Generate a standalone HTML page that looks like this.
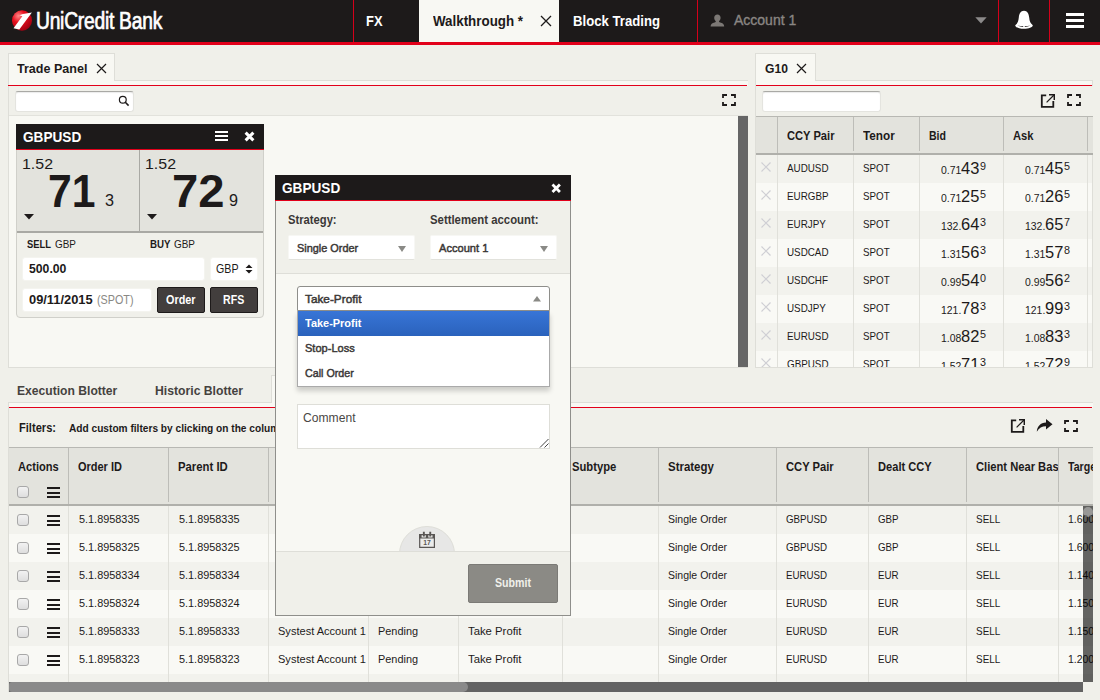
<!DOCTYPE html>
<html>
<head>
<meta charset="utf-8">
<title>UniCredit Bank</title>
<style>
*{box-sizing:border-box;margin:0;padding:0}
html,body{width:1100px;height:700px;overflow:hidden}
body{background:#f0f0ea;font-family:"Liberation Sans",Arial,sans-serif;font-size:12px;color:#1d1a1a;position:relative}
.a{position:absolute}
.t{position:absolute;white-space:nowrap;transform-origin:0 50%}
</style>
</head>
<body>
<div class="a" style="left:0px;top:0px;width:1100px;height:45px;background:#1d1a1a;border-bottom:3px solid #e2001a"></div>
<svg class="a" style="left:11px;top:9px" width="24" height="24" viewBox="0 0 24 24"><defs><radialGradient id="lg" cx="32%" cy="28%" r="78%"><stop offset="0" stop-color="#ff8a8a"/><stop offset=".4" stop-color="#e8101f"/><stop offset="1" stop-color="#a00012"/></radialGradient></defs><ellipse cx="11" cy="11.5" rx="10" ry="10.3" fill="url(#lg)"/><path d="M2.5 19.3 L8.3 20.4 L20.9 3.6 L11.9 4.9 L8.3 6.3 L11.3 7.2 Z" fill="#fff"/></svg>
<div class="t" style="left:35.5px;top:10px;font-size:23.3px;line-height:23.3px;color:#fff;transform:scaleX(0.8265);-webkit-text-stroke:.7px #fff;letter-spacing:-.3px;">UniCredit Bank</div>
<div class="a" style="left:353px;top:0px;width:1px;height:42px;background:#d4001a"></div>
<div class="a" style="left:697px;top:0px;width:1px;height:42px;background:#d4001a"></div>
<div class="a" style="left:998px;top:0px;width:1px;height:42px;background:#d4001a"></div>
<div class="a" style="left:1049px;top:0px;width:1px;height:42px;background:#d4001a"></div>
<div class="t" style="left:366px;top:14px;font-size:14px;line-height:14px;font-weight:bold;color:#fff;transform:scaleX(0.9223);">FX</div>
<div class="a" style="left:419px;top:0px;width:140px;height:42px;background:#f8f8f3"></div>
<div class="t" style="left:432.5px;top:14px;font-size:14px;line-height:14px;font-weight:bold;color:#1d1a1a;transform:scaleX(0.9538);">Walkthrough *</div>
<svg class="a" style="left:540px;top:15px" width="12" height="12" viewBox="0 0 12 12"><path d="M1 1 L11 11 M11 1 L1 11" stroke="#1d1a1a" stroke-width="1.3" fill="none"/></svg>
<div class="t" style="left:572.5px;top:14px;font-size:14px;line-height:14px;font-weight:bold;color:#fff;transform:scaleX(0.9399);">Block Trading</div>
<svg class="a" style="left:710px;top:13.5px" width="15" height="13" viewBox="0 0 15 13"><path d="M7.4 0.4 C9.4 0.4 10.6 1.9 10.6 3.8 C10.6 5.3 9.9 6.5 9 7.2 C9 7.8 9.3 8.2 10.2 8.5 C12.6 9.2 14.2 9.9 14.2 12.6 L0.6 12.6 C0.6 9.9 2.2 9.2 4.6 8.5 C5.5 8.2 5.8 7.8 5.8 7.2 C4.9 6.5 4.2 5.3 4.2 3.8 C4.200 1.900 5.400 0.400 7.400 0.400 Z" fill="#7c7875"/></svg>
<div class="t" style="left:734px;top:13px;font-size:14px;line-height:14px;color:#8a8683;transform:scaleX(0.9991);-webkit-text-stroke:.35px #8a8683;">Account 1</div>
<svg class="a" style="left:975px;top:17px" width="12" height="7" viewBox="0 0 12 7"><path d="M0.3 0.2 L11.7 0.2 L6 6.6 Z" fill="#8c8a8a"/></svg>
<svg class="a" style="left:1014px;top:10px" width="20" height="20" viewBox="0 0 20 20"><path d="M10 0.8 C13.4 0.8 14.9 3.8 15.2 7.6 C15.5 11.6 16.6 13.6 18.8 15.2 C18.8 17.4 14.6 18.8 10 18.8 C5.4 18.8 1.2 17.4 1.2 15.200 C3.4 13.6 4.5 11.6 4.8 7.6 C5.1 3.8 6.6 0.8 10 0.8 Z" fill="#fff"/><path d="M3.4 15.3 C5 16.6 7.6 17 10 17 C12.4 17 15 16.6 16.6 15.3 C15 15.9 12.4 16.1 10 16.1 C7.6 16.1 5 15.9 3.4 15.3 Z" fill="#1d1a1a"/><circle cx="10" cy="16.5" r="0.9" fill="#fff"/></svg>
<div class="a" style="left:1066.3px;top:12.8px;width:17.7px;height:3.4px;background:#fff"></div>
<div class="a" style="left:1066.3px;top:18.8px;width:17.7px;height:3.4px;background:#fff"></div>
<div class="a" style="left:1066.3px;top:24.8px;width:17.7px;height:3.4px;background:#fff"></div>
<div class="a" style="left:8px;top:53px;width:107px;height:28px;background:#f8f8f3;border:1px solid #deded8;border-bottom:none"></div>
<div class="t" style="left:17px;top:62px;font-size:13px;line-height:13px;font-weight:bold;color:#1d1a1a;transform:scaleX(0.9661);">Trade Panel</div>
<svg class="a" style="left:95.5px;top:63px" width="11" height="11" viewBox="0 0 11 11"><path d="M1 1 L10 10 M10 1 L1 10" stroke="#1d1a1a" stroke-width="1.2" fill="none"/></svg>
<div class="a" style="left:115px;top:80px;width:633px;height:1px;background:#deded8"></div>
<div class="a" style="left:8px;top:81px;width:740px;height:287px;background:#f8f8f3;border-left:1px solid #deded8;border-bottom:1px solid #deded8"></div>
<div class="a" style="left:8px;top:85px;width:739px;height:1px;background:#e2001a"></div>
<div class="a" style="left:9px;top:86px;width:739px;height:30px;background:#f0f0ea;border-bottom:1px solid #e2e2dc"></div>
<div class="a" style="left:15px;top:91px;width:119px;height:21px;background:#fff;border:1px solid #e4e4df;border-top:1px solid #a9a9a5;border-radius:3px;box-shadow:inset 0 1px 1px rgba(0,0,0,.08)"></div>
<svg class="a" style="left:118px;top:95px" width="12" height="12" viewBox="0 0 12 12"><circle cx="4.8" cy="4.8" r="3.4" stroke="#1d1a1a" stroke-width="1.2" fill="none"/><path d="M7.3 7.3 L10.6 10.6" stroke="#1d1a1a" stroke-width="1.6"/></svg>
<svg class="a" style="left:722px;top:94px" width="14" height="12" viewBox="0 0 14 12"><path d="M1 4 V1 H5 M9 1 H13 V4 M13 8 V11 H9 M5 11 H1 V8" stroke="#1d1a1a" stroke-width="1.8" fill="none"/></svg>
<div class="a" style="left:738px;top:116px;width:10px;height:251px;background:#666"></div>
<div class="a" style="left:16px;top:124px;width:248px;height:194px;background:#f0f0ea;border:1px solid #d0d0ca;border-radius:0 0 4px 4px"></div>
<div class="a" style="left:16px;top:124px;width:248px;height:26px;background:#1d1a1a;border-bottom:1px solid #e2001a"></div>
<div class="t" style="left:23px;top:129px;font-size:15px;line-height:15px;font-weight:bold;color:#fff;transform:scaleX(0.9069);">GBPUSD</div>
<div class="a" style="left:215.4px;top:131px;width:12.6px;height:2px;background:#fff"></div>
<div class="a" style="left:215.4px;top:135px;width:12.6px;height:2px;background:#fff"></div>
<div class="a" style="left:215.4px;top:139px;width:12.6px;height:2px;background:#fff"></div>
<svg class="a" style="left:244.4px;top:130.6px" width="11" height="11" viewBox="0 0 11 11"><path d="M1.6 1.6 L9.4 9.4 M9.4 1.6 L1.6 9.4" stroke="#fff" stroke-width="3" fill="none"/></svg>
<div class="a" style="left:17px;top:150px;width:246px;height:81px;background:#e3e3dd"></div>
<div class="a" style="left:17px;top:231px;width:246px;height:2px;background:#a9a9a4"></div>
<div class="a" style="left:139px;top:150px;width:1px;height:81px;background:#a9a9a4"></div>
<div class="t" style="left:22px;top:156px;font-size:15px;line-height:15px;color:#1d1a1a;transform:scaleX(1.0620);">1.52</div>
<div class="t" style="left:48.4px;top:168px;font-size:46px;line-height:46px;font-weight:bold;color:#1d1a1a;transform:scaleX(0.9284);">71</div>
<div class="t" style="left:104.5px;top:192px;font-size:17px;line-height:17px;color:#1d1a1a;transform:scaleX(0.9520);">3</div>
<svg class="a" style="left:24px;top:214px" width="10" height="6" viewBox="0 0 10 6"><path d="M0 0 H10 L5 5.5 Z" fill="#1d1a1a"/></svg>
<div class="t" style="left:145px;top:156px;font-size:15px;line-height:15px;color:#1d1a1a;transform:scaleX(1.0620);">1.52</div>
<div class="t" style="left:171.5px;top:168px;font-size:46px;line-height:46px;font-weight:bold;color:#1d1a1a;transform:scaleX(1.0262);">72</div>
<div class="t" style="left:229px;top:192px;font-size:17px;line-height:17px;color:#1d1a1a;transform:scaleX(0.9520);">9</div>
<svg class="a" style="left:147px;top:214px" width="10" height="6" viewBox="0 0 10 6"><path d="M0 0 H10 L5 5.5 Z" fill="#1d1a1a"/></svg>
<div class="t" style="left:27px;top:239px;font-size:11px;line-height:11px;font-weight:bold;color:#1d1a1a;transform:scaleX(0.8537);">SELL</div>
<div class="t" style="left:54.7px;top:239px;font-size:11px;line-height:11px;color:#1d1a1a;transform:scaleX(0.9040);">GBP</div>
<div class="t" style="left:150px;top:239px;font-size:11px;line-height:11px;font-weight:bold;color:#1d1a1a;transform:scaleX(0.8827);">BUY</div>
<div class="t" style="left:174px;top:239px;font-size:11px;line-height:11px;color:#1d1a1a;transform:scaleX(0.9040);">GBP</div>
<div class="a" style="left:22px;top:257px;width:183px;height:24px;background:#fff;border:1px solid #f4f4ef;border-radius:3px"></div>
<div class="t" style="left:29.3px;top:263px;font-size:12px;line-height:12px;font-weight:bold;color:#1d1a1a;transform:scaleX(1.0191);">500.00</div>
<div class="a" style="left:210px;top:257px;width:48px;height:24px;background:#fff;border:1px solid #f4f4ef;border-radius:3px"></div>
<div class="t" style="left:216.3px;top:263px;font-size:12px;line-height:12px;color:#1d1a1a;transform:scaleX(0.8878);">GBP</div>
<svg class="a" style="left:245px;top:263px" width="8" height="12" viewBox="0 0 8 12"><path d="M0.5 5 L4 1.4 L7.5 5 Z M0.5 7 L4 10.6 L7.5 7 Z" fill="#1d1a1a"/></svg>
<div class="a" style="left:22px;top:288px;width:130px;height:24px;background:#fff;border:1px solid #f4f4ef;border-radius:3px"></div>
<div class="t" style="left:29.3px;top:294px;font-size:12px;line-height:12px;font-weight:bold;color:#1d1a1a;transform:scaleX(1.0709);">09/11/2015</div>
<div class="t" style="left:97.1px;top:294px;font-size:12px;line-height:12px;color:#8a8884;transform:scaleX(0.8976);">(SPOT)</div>
<div class="a" style="left:157px;top:287px;width:48px;height:26px;background:#423e3d;border:1px solid #1d1a1a;border-radius:2px"></div>
<div class="t" style="left:166.3px;top:294px;font-size:12px;line-height:12px;font-weight:bold;color:#fff;transform:scaleX(0.9028);">Order</div>
<div class="a" style="left:210px;top:287px;width:48px;height:26px;background:#423e3d;border:1px solid #1d1a1a;border-radius:2px"></div>
<div class="t" style="left:223.3px;top:294px;font-size:12px;line-height:12px;font-weight:bold;color:#fff;transform:scaleX(0.8833);">RFS</div>
<div class="a" style="left:755px;top:53px;width:61px;height:28px;background:#f8f8f3;border:1px solid #deded8;border-bottom:none"></div>
<div class="t" style="left:764.5px;top:62px;font-size:13px;line-height:13px;font-weight:bold;color:#1d1a1a;transform:scaleX(0.9320);">G10</div>
<svg class="a" style="left:796px;top:63px" width="11" height="11" viewBox="0 0 11 11"><path d="M1 1 L10 10 M10 1 L1 10" stroke="#1d1a1a" stroke-width="1.2" fill="none"/></svg>
<div class="a" style="left:816px;top:80px;width:277px;height:1px;background:#deded8"></div>
<div class="a" style="left:755px;top:81px;width:338px;height:287px;background:#f8f8f3;border:1px solid #deded8;border-top:none"></div>
<div class="a" style="left:756px;top:85px;width:336px;height:1px;background:#e2001a"></div>
<div class="a" style="left:756px;top:86px;width:337px;height:30px;background:#f0f0ea"></div>
<div class="a" style="left:762px;top:91px;width:119px;height:21px;background:#fff;border:1px solid #e4e4df;border-top:1px solid #a9a9a5;border-radius:3px;box-shadow:inset 0 1px 1px rgba(0,0,0,.08)"></div>
<svg class="a" style="left:1040px;top:93px" width="15" height="15" viewBox="0 0 15 15"><path d="M6.2 2.3 H1.8 V13.8 H13.3 V8" stroke="#1d1a1a" stroke-width="1.8" fill="none"/><path d="M9 1.7 H14.300 V7" stroke="#1d1a1a" stroke-width="1.500" fill="none"/><path d="M14 2 L6.600 9.400" stroke="#1d1a1a" stroke-width="1.200" fill="none"/></svg>
<svg class="a" style="left:1067px;top:94px" width="14" height="12" viewBox="0 0 14 12"><path d="M1 4 V1 H5 M9 1 H13 V4 M13 8 V11 H9 M5 11 H1 V8" stroke="#1d1a1a" stroke-width="1.8" fill="none"/></svg>
<div class="a" style="left:756px;top:116px;width:337px;height:39px;background:#e3e3dd;border-top:1px solid #b8b8b3;border-bottom:2px solid #b0b0ab"></div>
<div class="a" style="left:777px;top:117px;width:1px;height:36px;background:#bdbdb8"></div>
<div class="a" style="left:853px;top:117px;width:1px;height:34px;background:#bdbdb8"></div>
<div class="a" style="left:919px;top:117px;width:1px;height:34px;background:#bdbdb8"></div>
<div class="a" style="left:1003px;top:117px;width:1px;height:34px;background:#bdbdb8"></div>
<div class="a" style="left:1087px;top:117px;width:1px;height:34px;background:#bdbdb8"></div>
<div class="t" style="left:787px;top:130px;font-size:12px;line-height:12px;font-weight:bold;color:#1d1a1a;transform:scaleX(0.9289);">CCY Pair</div>
<div class="t" style="left:863.3px;top:130px;font-size:12px;line-height:12px;font-weight:bold;color:#1d1a1a;transform:scaleX(0.9772);">Tenor</div>
<div class="t" style="left:929px;top:130px;font-size:12px;line-height:12px;font-weight:bold;color:#1d1a1a;transform:scaleX(0.8795);">Bid</div>
<div class="t" style="left:1013px;top:130px;font-size:12px;line-height:12px;font-weight:bold;color:#1d1a1a;transform:scaleX(0.9313);">Ask</div>
<div class="a" style="left:756px;top:155px;width:336px;height:212px;overflow:hidden">
<div class="a" style="left:0px;top:0px;width:336px;height:28px;background:#f2f2ed"></div>
<svg class="a" style="left:5px;top:6.5px" width="10" height="10" viewBox="0 0 10 10"><path d="M0.5 0.5 L9.5 9.5 M9.5 0.5 L0.5 9.5" stroke="#cfcfd4" stroke-width="1.2" fill="none"/></svg>
<div class="t" style="left:31px;top:8px;font-size:11px;line-height:11px;color:#1d1a1a;transform:scaleX(0.8930);">AUDUSD</div>
<div class="t" style="left:107.3px;top:8px;font-size:11px;line-height:11px;color:#1d1a1a;transform:scaleX(0.8882);">SPOT</div>
<div class="t" style="left:185.0px;top:10px;font-size:11px;line-height:11px;color:#1d1a1a;transform:scaleX(0.9483);">0.71</div>
<div class="t" style="left:205.10000000000002px;top:6px;font-size:16px;line-height:16px;color:#1d1a1a;transform:scaleX(1.0284);">43</div>
<div class="t" style="left:223.5px;top:6px;font-size:11px;line-height:11px;color:#1d1a1a;transform:scaleX(0.9809);">9</div>
<div class="t" style="left:269.0px;top:10px;font-size:11px;line-height:11px;color:#1d1a1a;transform:scaleX(0.9483);">0.71</div>
<div class="t" style="left:289.1px;top:6px;font-size:16px;line-height:16px;color:#1d1a1a;transform:scaleX(1.0284);">45</div>
<div class="t" style="left:307.5px;top:6px;font-size:11px;line-height:11px;color:#1d1a1a;transform:scaleX(0.9809);">5</div>
<div class="a" style="left:0px;top:28px;width:336px;height:28px;background:#f9f9f5"></div>
<svg class="a" style="left:5px;top:34.5px" width="10" height="10" viewBox="0 0 10 10"><path d="M0.5 0.5 L9.5 9.5 M9.5 0.5 L0.5 9.5" stroke="#cfcfd4" stroke-width="1.2" fill="none"/></svg>
<div class="t" style="left:31px;top:36px;font-size:11px;line-height:11px;color:#1d1a1a;transform:scaleX(0.8930);">EURGBP</div>
<div class="t" style="left:107.3px;top:36px;font-size:11px;line-height:11px;color:#1d1a1a;transform:scaleX(0.8882);">SPOT</div>
<div class="t" style="left:185.0px;top:38px;font-size:11px;line-height:11px;color:#1d1a1a;transform:scaleX(0.9483);">0.71</div>
<div class="t" style="left:205.10000000000002px;top:34px;font-size:16px;line-height:16px;color:#1d1a1a;transform:scaleX(1.0284);">25</div>
<div class="t" style="left:223.5px;top:34px;font-size:11px;line-height:11px;color:#1d1a1a;transform:scaleX(0.9809);">5</div>
<div class="t" style="left:269.0px;top:38px;font-size:11px;line-height:11px;color:#1d1a1a;transform:scaleX(0.9483);">0.71</div>
<div class="t" style="left:289.1px;top:34px;font-size:16px;line-height:16px;color:#1d1a1a;transform:scaleX(1.0284);">26</div>
<div class="t" style="left:307.5px;top:34px;font-size:11px;line-height:11px;color:#1d1a1a;transform:scaleX(0.9809);">5</div>
<div class="a" style="left:0px;top:56px;width:336px;height:28px;background:#f2f2ed"></div>
<svg class="a" style="left:5px;top:62.5px" width="10" height="10" viewBox="0 0 10 10"><path d="M0.5 0.5 L9.5 9.5 M9.5 0.5 L0.5 9.5" stroke="#cfcfd4" stroke-width="1.2" fill="none"/></svg>
<div class="t" style="left:31px;top:64px;font-size:11px;line-height:11px;color:#1d1a1a;transform:scaleX(0.8930);">EURJPY</div>
<div class="t" style="left:107.3px;top:64px;font-size:11px;line-height:11px;color:#1d1a1a;transform:scaleX(0.8882);">SPOT</div>
<div class="t" style="left:185.0px;top:66px;font-size:11px;line-height:11px;color:#1d1a1a;transform:scaleX(0.9483);">132.</div>
<div class="t" style="left:205.10000000000002px;top:62px;font-size:16px;line-height:16px;color:#1d1a1a;transform:scaleX(1.0284);">64</div>
<div class="t" style="left:223.5px;top:62px;font-size:11px;line-height:11px;color:#1d1a1a;transform:scaleX(0.9809);">3</div>
<div class="t" style="left:269.0px;top:66px;font-size:11px;line-height:11px;color:#1d1a1a;transform:scaleX(0.9483);">132.</div>
<div class="t" style="left:289.1px;top:62px;font-size:16px;line-height:16px;color:#1d1a1a;transform:scaleX(1.0284);">65</div>
<div class="t" style="left:307.5px;top:62px;font-size:11px;line-height:11px;color:#1d1a1a;transform:scaleX(0.9809);">7</div>
<div class="a" style="left:0px;top:84px;width:336px;height:28px;background:#f9f9f5"></div>
<svg class="a" style="left:5px;top:90.5px" width="10" height="10" viewBox="0 0 10 10"><path d="M0.5 0.5 L9.5 9.5 M9.5 0.5 L0.5 9.5" stroke="#cfcfd4" stroke-width="1.2" fill="none"/></svg>
<div class="t" style="left:31px;top:92px;font-size:11px;line-height:11px;color:#1d1a1a;transform:scaleX(0.8930);">USDCAD</div>
<div class="t" style="left:107.3px;top:92px;font-size:11px;line-height:11px;color:#1d1a1a;transform:scaleX(0.8882);">SPOT</div>
<div class="t" style="left:185.0px;top:94px;font-size:11px;line-height:11px;color:#1d1a1a;transform:scaleX(0.9483);">1.31</div>
<div class="t" style="left:205.10000000000002px;top:90px;font-size:16px;line-height:16px;color:#1d1a1a;transform:scaleX(1.0284);">56</div>
<div class="t" style="left:223.5px;top:90px;font-size:11px;line-height:11px;color:#1d1a1a;transform:scaleX(0.9809);">3</div>
<div class="t" style="left:269.0px;top:94px;font-size:11px;line-height:11px;color:#1d1a1a;transform:scaleX(0.9483);">1.31</div>
<div class="t" style="left:289.1px;top:90px;font-size:16px;line-height:16px;color:#1d1a1a;transform:scaleX(1.0284);">57</div>
<div class="t" style="left:307.5px;top:90px;font-size:11px;line-height:11px;color:#1d1a1a;transform:scaleX(0.9809);">8</div>
<div class="a" style="left:0px;top:112px;width:336px;height:28px;background:#f2f2ed"></div>
<svg class="a" style="left:5px;top:118.5px" width="10" height="10" viewBox="0 0 10 10"><path d="M0.5 0.5 L9.5 9.5 M9.5 0.5 L0.5 9.5" stroke="#cfcfd4" stroke-width="1.2" fill="none"/></svg>
<div class="t" style="left:31px;top:120px;font-size:11px;line-height:11px;color:#1d1a1a;transform:scaleX(0.8930);">USDCHF</div>
<div class="t" style="left:107.3px;top:120px;font-size:11px;line-height:11px;color:#1d1a1a;transform:scaleX(0.8882);">SPOT</div>
<div class="t" style="left:185.0px;top:122px;font-size:11px;line-height:11px;color:#1d1a1a;transform:scaleX(0.9483);">0.99</div>
<div class="t" style="left:205.10000000000002px;top:118px;font-size:16px;line-height:16px;color:#1d1a1a;transform:scaleX(1.0284);">54</div>
<div class="t" style="left:223.5px;top:118px;font-size:11px;line-height:11px;color:#1d1a1a;transform:scaleX(0.9809);">0</div>
<div class="t" style="left:269.0px;top:122px;font-size:11px;line-height:11px;color:#1d1a1a;transform:scaleX(0.9483);">0.99</div>
<div class="t" style="left:289.1px;top:118px;font-size:16px;line-height:16px;color:#1d1a1a;transform:scaleX(1.0284);">56</div>
<div class="t" style="left:307.5px;top:118px;font-size:11px;line-height:11px;color:#1d1a1a;transform:scaleX(0.9809);">2</div>
<div class="a" style="left:0px;top:140px;width:336px;height:28px;background:#f9f9f5"></div>
<svg class="a" style="left:5px;top:146.5px" width="10" height="10" viewBox="0 0 10 10"><path d="M0.5 0.5 L9.5 9.5 M9.5 0.5 L0.5 9.5" stroke="#cfcfd4" stroke-width="1.2" fill="none"/></svg>
<div class="t" style="left:31px;top:148px;font-size:11px;line-height:11px;color:#1d1a1a;transform:scaleX(0.8930);">USDJPY</div>
<div class="t" style="left:107.3px;top:148px;font-size:11px;line-height:11px;color:#1d1a1a;transform:scaleX(0.8882);">SPOT</div>
<div class="t" style="left:185.0px;top:150px;font-size:11px;line-height:11px;color:#1d1a1a;transform:scaleX(0.9483);">121.</div>
<div class="t" style="left:205.10000000000002px;top:146px;font-size:16px;line-height:16px;color:#1d1a1a;transform:scaleX(1.0284);">78</div>
<div class="t" style="left:223.5px;top:146px;font-size:11px;line-height:11px;color:#1d1a1a;transform:scaleX(0.9809);">3</div>
<div class="t" style="left:269.0px;top:150px;font-size:11px;line-height:11px;color:#1d1a1a;transform:scaleX(0.9483);">121.</div>
<div class="t" style="left:289.1px;top:146px;font-size:16px;line-height:16px;color:#1d1a1a;transform:scaleX(1.0284);">99</div>
<div class="t" style="left:307.5px;top:146px;font-size:11px;line-height:11px;color:#1d1a1a;transform:scaleX(0.9809);">3</div>
<div class="a" style="left:0px;top:168px;width:336px;height:28px;background:#f2f2ed"></div>
<svg class="a" style="left:5px;top:174.5px" width="10" height="10" viewBox="0 0 10 10"><path d="M0.5 0.5 L9.5 9.5 M9.5 0.5 L0.5 9.5" stroke="#cfcfd4" stroke-width="1.2" fill="none"/></svg>
<div class="t" style="left:31px;top:176px;font-size:11px;line-height:11px;color:#1d1a1a;transform:scaleX(0.8930);">EURUSD</div>
<div class="t" style="left:107.3px;top:176px;font-size:11px;line-height:11px;color:#1d1a1a;transform:scaleX(0.8882);">SPOT</div>
<div class="t" style="left:185.0px;top:178px;font-size:11px;line-height:11px;color:#1d1a1a;transform:scaleX(0.9483);">1.08</div>
<div class="t" style="left:205.10000000000002px;top:174px;font-size:16px;line-height:16px;color:#1d1a1a;transform:scaleX(1.0284);">82</div>
<div class="t" style="left:223.5px;top:174px;font-size:11px;line-height:11px;color:#1d1a1a;transform:scaleX(0.9809);">5</div>
<div class="t" style="left:269.0px;top:178px;font-size:11px;line-height:11px;color:#1d1a1a;transform:scaleX(0.9483);">1.08</div>
<div class="t" style="left:289.1px;top:174px;font-size:16px;line-height:16px;color:#1d1a1a;transform:scaleX(1.0284);">83</div>
<div class="t" style="left:307.5px;top:174px;font-size:11px;line-height:11px;color:#1d1a1a;transform:scaleX(0.9809);">3</div>
<div class="a" style="left:0px;top:196px;width:336px;height:28px;background:#f9f9f5"></div>
<svg class="a" style="left:5px;top:202.5px" width="10" height="10" viewBox="0 0 10 10"><path d="M0.5 0.5 L9.5 9.5 M9.5 0.5 L0.5 9.5" stroke="#cfcfd4" stroke-width="1.2" fill="none"/></svg>
<div class="t" style="left:31px;top:204px;font-size:11px;line-height:11px;color:#1d1a1a;transform:scaleX(0.8930);">GBPUSD</div>
<div class="t" style="left:107.3px;top:204px;font-size:11px;line-height:11px;color:#1d1a1a;transform:scaleX(0.8882);">SPOT</div>
<div class="t" style="left:185.0px;top:206px;font-size:11px;line-height:11px;color:#1d1a1a;transform:scaleX(0.9483);">1.52</div>
<div class="t" style="left:205.10000000000002px;top:202px;font-size:16px;line-height:16px;color:#1d1a1a;transform:scaleX(1.0284);">71</div>
<div class="t" style="left:223.5px;top:202px;font-size:11px;line-height:11px;color:#1d1a1a;transform:scaleX(0.9809);">3</div>
<div class="t" style="left:269.0px;top:206px;font-size:11px;line-height:11px;color:#1d1a1a;transform:scaleX(0.9483);">1.52</div>
<div class="t" style="left:289.1px;top:202px;font-size:16px;line-height:16px;color:#1d1a1a;transform:scaleX(1.0284);">72</div>
<div class="t" style="left:307.5px;top:202px;font-size:11px;line-height:11px;color:#1d1a1a;transform:scaleX(0.9809);">9</div>
</div>
<div class="a" style="left:777px;top:155px;width:1px;height:212px;background:#e0e0da"></div>
<div class="a" style="left:853px;top:155px;width:1px;height:212px;background:#e0e0da"></div>
<div class="a" style="left:919px;top:155px;width:1px;height:212px;background:#e0e0da"></div>
<div class="a" style="left:1003px;top:155px;width:1px;height:212px;background:#e0e0da"></div>
<div class="a" style="left:1087px;top:155px;width:1px;height:212px;background:#e0e0da"></div>
<div class="t" style="left:17px;top:384px;font-size:13px;line-height:13px;font-weight:bold;color:#45423f;transform:scaleX(0.9320);">Execution Blotter</div>
<div class="t" style="left:154.6px;top:384px;font-size:13px;line-height:13px;font-weight:bold;color:#45423f;transform:scaleX(0.9383);">Historic Blotter</div>
<div class="a" style="left:271px;top:375px;width:110px;height:28px;background:#f8f8f3;border:1px solid #deded8;border-bottom:none"></div>
<div class="t" style="left:280px;top:384px;font-size:13px;line-height:13px;font-weight:bold;color:#1d1a1a;transform:scaleX(0.9889);">Order Blotter</div>
<div class="a" style="left:8px;top:402px;width:1085px;height:1px;background:#deded8"></div>
<div class="a" style="left:272px;top:402px;width:108px;height:1px;background:#f8f8f3"></div>
<div class="a" style="left:8px;top:403px;width:1085px;height:289px;background:#f8f8f3;border-left:1px solid #deded8;border-bottom:1px solid #deded8"></div>
<div class="a" style="left:9px;top:407px;width:1083px;height:1px;background:#e2001a"></div>
<div class="a" style="left:9px;top:408px;width:1084px;height:39px;background:#f0f0ea"></div>
<div class="t" style="left:19.2px;top:422px;font-size:12px;line-height:12px;font-weight:bold;color:#1d1a1a;transform:scaleX(0.9249);">Filters:</div>
<div class="t" style="left:68.7px;top:423px;font-size:11px;line-height:11px;font-weight:bold;color:#1d1a1a;transform:scaleX(0.9220);">Add custom filters by clicking on the column headers</div>
<svg class="a" style="left:1010px;top:418px" width="15" height="15" viewBox="0 0 15 15"><path d="M6.2 2.3 H1.8 V13.8 H13.3 V8" stroke="#1d1a1a" stroke-width="1.8" fill="none"/><path d="M9 1.7 H14.300 V7" stroke="#1d1a1a" stroke-width="1.500" fill="none"/><path d="M14 2 L6.600 9.400" stroke="#1d1a1a" stroke-width="1.200" fill="none"/></svg>
<svg class="a" style="left:1036px;top:418px" width="17" height="15" viewBox="0 0 17 15"><path d="M10 1 L16.5 6.3 L10 11.6 V8.2 C6 8.2 3 9.8 0.8 13.8 C1.2 8.4 4.5 4.7 10 4.5 Z" fill="#1d1a1a"/></svg>
<svg class="a" style="left:1064px;top:420px" width="14" height="12" viewBox="0 0 14 12"><path d="M1 4 V1 H5 M9 1 H13 V4 M13 8 V11 H9 M5 11 H1 V8" stroke="#1d1a1a" stroke-width="1.8" fill="none"/></svg>
<div class="a" style="left:9px;top:447px;width:1084px;height:59px;background:#e3e3dd;border-top:1px solid #b8b8b3;border-bottom:2px solid #b0b0ab"></div>
<div class="a" style="left:68px;top:448px;width:1px;height:56px;background:#bdbdb8"></div>
<div class="a" style="left:168px;top:448px;width:1px;height:54px;background:#bdbdb8"></div>
<div class="a" style="left:268px;top:448px;width:1px;height:54px;background:#bdbdb8"></div>
<div class="a" style="left:368px;top:448px;width:1px;height:54px;background:#bdbdb8"></div>
<div class="a" style="left:458px;top:448px;width:1px;height:54px;background:#bdbdb8"></div>
<div class="a" style="left:562px;top:448px;width:1px;height:54px;background:#bdbdb8"></div>
<div class="a" style="left:658px;top:448px;width:1px;height:54px;background:#bdbdb8"></div>
<div class="a" style="left:776px;top:448px;width:1px;height:54px;background:#bdbdb8"></div>
<div class="a" style="left:868px;top:448px;width:1px;height:54px;background:#bdbdb8"></div>
<div class="a" style="left:966px;top:448px;width:1px;height:54px;background:#bdbdb8"></div>
<div class="a" style="left:1058px;top:448px;width:1px;height:54px;background:#bdbdb8"></div>
<div class="t" style="left:18.3px;top:461px;font-size:12px;line-height:12px;font-weight:bold;color:#1d1a1a;transform:scaleX(0.9250);">Actions</div>
<div class="t" style="left:78.3px;top:461px;font-size:12px;line-height:12px;font-weight:bold;color:#1d1a1a;transform:scaleX(0.9144);">Order ID</div>
<div class="t" style="left:178px;top:461px;font-size:12px;line-height:12px;font-weight:bold;color:#1d1a1a;transform:scaleX(0.9434);">Parent ID</div>
<div class="t" style="left:278px;top:461px;font-size:12px;line-height:12px;font-weight:bold;color:#1d1a1a;transform:scaleX(0.9200);">Account</div>
<div class="t" style="left:378px;top:461px;font-size:12px;line-height:12px;font-weight:bold;color:#1d1a1a;transform:scaleX(0.9200);">Status</div>
<div class="t" style="left:468px;top:461px;font-size:12px;line-height:12px;font-weight:bold;color:#1d1a1a;transform:scaleX(0.9200);">Type</div>
<div class="t" style="left:571.7px;top:461px;font-size:12px;line-height:12px;font-weight:bold;color:#1d1a1a;transform:scaleX(0.9359);">Subtype</div>
<div class="t" style="left:667.7px;top:461px;font-size:12px;line-height:12px;font-weight:bold;color:#1d1a1a;transform:scaleX(0.9539);">Strategy</div>
<div class="t" style="left:785.8px;top:461px;font-size:12px;line-height:12px;font-weight:bold;color:#1d1a1a;transform:scaleX(0.9328);">CCY Pair</div>
<div class="t" style="left:877.8px;top:461px;font-size:12px;line-height:12px;font-weight:bold;color:#1d1a1a;transform:scaleX(0.9257);">Dealt CCY</div>
<div class="a" style="left:966px;top:448px;width:92px;height:50px;overflow:hidden">
<div class="t" style="left:10.3px;top:13px;font-size:12px;line-height:12px;font-weight:bold;color:#1d1a1a;transform:scaleX(0.9313);">Client Near Base</div>
</div>
<div class="a" style="left:1059px;top:448px;width:34px;height:50px;overflow:hidden">
<div class="t" style="left:9.3px;top:13px;font-size:12px;line-height:12px;font-weight:bold;color:#1d1a1a;transform:scaleX(0.8850);">Target</div>
</div>
<div class="a" style="left:17px;top:486px;width:12px;height:12px;border:1px solid #a8a8a8;border-radius:3px;background:linear-gradient(#f2f2f2,#dedede)"></div>
<div class="a" style="left:47px;top:487px;width:13px;height:2px;background:#1d1a1a"></div>
<div class="a" style="left:47px;top:491.5px;width:13px;height:2px;background:#1d1a1a"></div>
<div class="a" style="left:47px;top:496px;width:13px;height:2px;background:#1d1a1a"></div>
<div class="a" style="left:9px;top:506px;width:1084px;height:176px;overflow:hidden">
<div class="a" style="left:0px;top:0px;width:1084px;height:28px;background:#f2f2ed"></div>
<div class="a" style="left:8px;top:8px;width:12px;height:12px;border:1px solid #a8a8a8;border-radius:3px;background:linear-gradient(#f2f2f2,#dedede)"></div>
<div class="a" style="left:38px;top:9px;width:13px;height:2px;background:#1d1a1a"></div>
<div class="a" style="left:38px;top:13.5px;width:13px;height:2px;background:#1d1a1a"></div>
<div class="a" style="left:38px;top:18px;width:13px;height:2px;background:#1d1a1a"></div>
<div class="t" style="left:69.5px;top:8px;font-size:11px;line-height:11px;color:#1d1a1a;transform:scaleX(0.9891);">5.1.8958335</div>
<div class="t" style="left:169.5px;top:8px;font-size:11px;line-height:11px;color:#1d1a1a;transform:scaleX(0.9891);">5.1.8958335</div>
<div class="t" style="left:269.2px;top:8px;font-size:11px;line-height:11px;color:#1d1a1a;transform:scaleX(1.0042);">Systest Account 1</div>
<div class="t" style="left:368.7px;top:8px;font-size:11px;line-height:11px;color:#1d1a1a;transform:scaleX(0.9909);">Pending</div>
<div class="t" style="left:459px;top:8px;font-size:11px;line-height:11px;color:#1d1a1a;transform:scaleX(1.0296);">Take Profit</div>
<div class="t" style="left:658.8px;top:8px;font-size:11px;line-height:11px;color:#1d1a1a;transform:scaleX(0.9555);">Single Order</div>
<div class="t" style="left:776.8px;top:8px;font-size:11px;line-height:11px;color:#1d1a1a;transform:scaleX(0.8850);">GBPUSD</div>
<div class="t" style="left:868.8px;top:8px;font-size:11px;line-height:11px;color:#1d1a1a;transform:scaleX(0.8850);">GBP</div>
<div class="t" style="left:966.8px;top:8px;font-size:11px;line-height:11px;color:#1d1a1a;transform:scaleX(0.9031);">SELL</div>
<div class="t" style="left:1058.8px;top:8px;font-size:11px;line-height:11px;color:#1d1a1a;transform:scaleX(0.9500);">1.6000</div>
<div class="a" style="left:0px;top:28px;width:1084px;height:28px;background:#f9f9f5"></div>
<div class="a" style="left:8px;top:36px;width:12px;height:12px;border:1px solid #a8a8a8;border-radius:3px;background:linear-gradient(#f2f2f2,#dedede)"></div>
<div class="a" style="left:38px;top:37px;width:13px;height:2px;background:#1d1a1a"></div>
<div class="a" style="left:38px;top:41.5px;width:13px;height:2px;background:#1d1a1a"></div>
<div class="a" style="left:38px;top:46px;width:13px;height:2px;background:#1d1a1a"></div>
<div class="t" style="left:69.5px;top:36px;font-size:11px;line-height:11px;color:#1d1a1a;transform:scaleX(0.9891);">5.1.8958325</div>
<div class="t" style="left:169.5px;top:36px;font-size:11px;line-height:11px;color:#1d1a1a;transform:scaleX(0.9891);">5.1.8958325</div>
<div class="t" style="left:269.2px;top:36px;font-size:11px;line-height:11px;color:#1d1a1a;transform:scaleX(1.0042);">Systest Account 1</div>
<div class="t" style="left:368.7px;top:36px;font-size:11px;line-height:11px;color:#1d1a1a;transform:scaleX(0.9909);">Pending</div>
<div class="t" style="left:459px;top:36px;font-size:11px;line-height:11px;color:#1d1a1a;transform:scaleX(1.0296);">Take Profit</div>
<div class="t" style="left:658.8px;top:36px;font-size:11px;line-height:11px;color:#1d1a1a;transform:scaleX(0.9555);">Single Order</div>
<div class="t" style="left:776.8px;top:36px;font-size:11px;line-height:11px;color:#1d1a1a;transform:scaleX(0.8850);">GBPUSD</div>
<div class="t" style="left:868.8px;top:36px;font-size:11px;line-height:11px;color:#1d1a1a;transform:scaleX(0.8850);">GBP</div>
<div class="t" style="left:966.8px;top:36px;font-size:11px;line-height:11px;color:#1d1a1a;transform:scaleX(0.9031);">SELL</div>
<div class="t" style="left:1058.8px;top:36px;font-size:11px;line-height:11px;color:#1d1a1a;transform:scaleX(0.9500);">1.6000</div>
<div class="a" style="left:0px;top:56px;width:1084px;height:28px;background:#f2f2ed"></div>
<div class="a" style="left:8px;top:64px;width:12px;height:12px;border:1px solid #a8a8a8;border-radius:3px;background:linear-gradient(#f2f2f2,#dedede)"></div>
<div class="a" style="left:38px;top:65px;width:13px;height:2px;background:#1d1a1a"></div>
<div class="a" style="left:38px;top:69.5px;width:13px;height:2px;background:#1d1a1a"></div>
<div class="a" style="left:38px;top:74px;width:13px;height:2px;background:#1d1a1a"></div>
<div class="t" style="left:69.5px;top:64px;font-size:11px;line-height:11px;color:#1d1a1a;transform:scaleX(0.9891);">5.1.8958334</div>
<div class="t" style="left:169.5px;top:64px;font-size:11px;line-height:11px;color:#1d1a1a;transform:scaleX(0.9891);">5.1.8958334</div>
<div class="t" style="left:269.2px;top:64px;font-size:11px;line-height:11px;color:#1d1a1a;transform:scaleX(1.0042);">Systest Account 1</div>
<div class="t" style="left:368.7px;top:64px;font-size:11px;line-height:11px;color:#1d1a1a;transform:scaleX(0.9909);">Pending</div>
<div class="t" style="left:459px;top:64px;font-size:11px;line-height:11px;color:#1d1a1a;transform:scaleX(1.0296);">Take Profit</div>
<div class="t" style="left:658.8px;top:64px;font-size:11px;line-height:11px;color:#1d1a1a;transform:scaleX(0.9555);">Single Order</div>
<div class="t" style="left:776.8px;top:64px;font-size:11px;line-height:11px;color:#1d1a1a;transform:scaleX(0.8850);">EURUSD</div>
<div class="t" style="left:868.8px;top:64px;font-size:11px;line-height:11px;color:#1d1a1a;transform:scaleX(0.8850);">EUR</div>
<div class="t" style="left:966.8px;top:64px;font-size:11px;line-height:11px;color:#1d1a1a;transform:scaleX(0.9031);">SELL</div>
<div class="t" style="left:1058.8px;top:64px;font-size:11px;line-height:11px;color:#1d1a1a;transform:scaleX(0.9500);">1.1400</div>
<div class="a" style="left:0px;top:84px;width:1084px;height:28px;background:#f9f9f5"></div>
<div class="a" style="left:8px;top:92px;width:12px;height:12px;border:1px solid #a8a8a8;border-radius:3px;background:linear-gradient(#f2f2f2,#dedede)"></div>
<div class="a" style="left:38px;top:93px;width:13px;height:2px;background:#1d1a1a"></div>
<div class="a" style="left:38px;top:97.5px;width:13px;height:2px;background:#1d1a1a"></div>
<div class="a" style="left:38px;top:102px;width:13px;height:2px;background:#1d1a1a"></div>
<div class="t" style="left:69.5px;top:92px;font-size:11px;line-height:11px;color:#1d1a1a;transform:scaleX(0.9891);">5.1.8958324</div>
<div class="t" style="left:169.5px;top:92px;font-size:11px;line-height:11px;color:#1d1a1a;transform:scaleX(0.9891);">5.1.8958324</div>
<div class="t" style="left:269.2px;top:92px;font-size:11px;line-height:11px;color:#1d1a1a;transform:scaleX(1.0042);">Systest Account 1</div>
<div class="t" style="left:368.7px;top:92px;font-size:11px;line-height:11px;color:#1d1a1a;transform:scaleX(0.9909);">Pending</div>
<div class="t" style="left:459px;top:92px;font-size:11px;line-height:11px;color:#1d1a1a;transform:scaleX(1.0296);">Take Profit</div>
<div class="t" style="left:658.8px;top:92px;font-size:11px;line-height:11px;color:#1d1a1a;transform:scaleX(0.9555);">Single Order</div>
<div class="t" style="left:776.8px;top:92px;font-size:11px;line-height:11px;color:#1d1a1a;transform:scaleX(0.8850);">EURUSD</div>
<div class="t" style="left:868.8px;top:92px;font-size:11px;line-height:11px;color:#1d1a1a;transform:scaleX(0.8850);">EUR</div>
<div class="t" style="left:966.8px;top:92px;font-size:11px;line-height:11px;color:#1d1a1a;transform:scaleX(0.9031);">SELL</div>
<div class="t" style="left:1058.8px;top:92px;font-size:11px;line-height:11px;color:#1d1a1a;transform:scaleX(0.9500);">1.1500</div>
<div class="a" style="left:0px;top:112px;width:1084px;height:28px;background:#f2f2ed"></div>
<div class="a" style="left:8px;top:120px;width:12px;height:12px;border:1px solid #a8a8a8;border-radius:3px;background:linear-gradient(#f2f2f2,#dedede)"></div>
<div class="a" style="left:38px;top:121px;width:13px;height:2px;background:#1d1a1a"></div>
<div class="a" style="left:38px;top:125.5px;width:13px;height:2px;background:#1d1a1a"></div>
<div class="a" style="left:38px;top:130px;width:13px;height:2px;background:#1d1a1a"></div>
<div class="t" style="left:69.5px;top:120px;font-size:11px;line-height:11px;color:#1d1a1a;transform:scaleX(0.9891);">5.1.8958333</div>
<div class="t" style="left:169.5px;top:120px;font-size:11px;line-height:11px;color:#1d1a1a;transform:scaleX(0.9891);">5.1.8958333</div>
<div class="t" style="left:269.2px;top:120px;font-size:11px;line-height:11px;color:#1d1a1a;transform:scaleX(1.0042);">Systest Account 1</div>
<div class="t" style="left:368.7px;top:120px;font-size:11px;line-height:11px;color:#1d1a1a;transform:scaleX(0.9909);">Pending</div>
<div class="t" style="left:459px;top:120px;font-size:11px;line-height:11px;color:#1d1a1a;transform:scaleX(1.0296);">Take Profit</div>
<div class="t" style="left:658.8px;top:120px;font-size:11px;line-height:11px;color:#1d1a1a;transform:scaleX(0.9555);">Single Order</div>
<div class="t" style="left:776.8px;top:120px;font-size:11px;line-height:11px;color:#1d1a1a;transform:scaleX(0.8850);">EURUSD</div>
<div class="t" style="left:868.8px;top:120px;font-size:11px;line-height:11px;color:#1d1a1a;transform:scaleX(0.8850);">EUR</div>
<div class="t" style="left:966.8px;top:120px;font-size:11px;line-height:11px;color:#1d1a1a;transform:scaleX(0.9031);">SELL</div>
<div class="t" style="left:1058.8px;top:120px;font-size:11px;line-height:11px;color:#1d1a1a;transform:scaleX(0.9500);">1.1500</div>
<div class="a" style="left:0px;top:140px;width:1084px;height:28px;background:#f9f9f5"></div>
<div class="a" style="left:8px;top:148px;width:12px;height:12px;border:1px solid #a8a8a8;border-radius:3px;background:linear-gradient(#f2f2f2,#dedede)"></div>
<div class="a" style="left:38px;top:149px;width:13px;height:2px;background:#1d1a1a"></div>
<div class="a" style="left:38px;top:153.5px;width:13px;height:2px;background:#1d1a1a"></div>
<div class="a" style="left:38px;top:158px;width:13px;height:2px;background:#1d1a1a"></div>
<div class="t" style="left:69.5px;top:148px;font-size:11px;line-height:11px;color:#1d1a1a;transform:scaleX(0.9891);">5.1.8958323</div>
<div class="t" style="left:169.5px;top:148px;font-size:11px;line-height:11px;color:#1d1a1a;transform:scaleX(0.9891);">5.1.8958323</div>
<div class="t" style="left:269.2px;top:148px;font-size:11px;line-height:11px;color:#1d1a1a;transform:scaleX(1.0042);">Systest Account 1</div>
<div class="t" style="left:368.7px;top:148px;font-size:11px;line-height:11px;color:#1d1a1a;transform:scaleX(0.9909);">Pending</div>
<div class="t" style="left:459px;top:148px;font-size:11px;line-height:11px;color:#1d1a1a;transform:scaleX(1.0296);">Take Profit</div>
<div class="t" style="left:658.8px;top:148px;font-size:11px;line-height:11px;color:#1d1a1a;transform:scaleX(0.9555);">Single Order</div>
<div class="t" style="left:776.8px;top:148px;font-size:11px;line-height:11px;color:#1d1a1a;transform:scaleX(0.8850);">EURUSD</div>
<div class="t" style="left:868.8px;top:148px;font-size:11px;line-height:11px;color:#1d1a1a;transform:scaleX(0.8850);">EUR</div>
<div class="t" style="left:966.8px;top:148px;font-size:11px;line-height:11px;color:#1d1a1a;transform:scaleX(0.9031);">SELL</div>
<div class="t" style="left:1058.8px;top:148px;font-size:11px;line-height:11px;color:#1d1a1a;transform:scaleX(0.9500);">1.2000</div>
<div class="a" style="left:0px;top:168px;width:1084px;height:28px;background:#f2f2ed"></div>
<div class="a" style="left:8px;top:176px;width:12px;height:12px;border:1px solid #a8a8a8;border-radius:3px;background:linear-gradient(#f2f2f2,#dedede)"></div>
<div class="a" style="left:38px;top:177px;width:13px;height:2px;background:#1d1a1a"></div>
<div class="a" style="left:38px;top:181.5px;width:13px;height:2px;background:#1d1a1a"></div>
<div class="a" style="left:38px;top:186px;width:13px;height:2px;background:#1d1a1a"></div>
<div class="t" style="left:69.5px;top:176px;font-size:11px;line-height:11px;color:#1d1a1a;transform:scaleX(0.9891);">5.1.8958332</div>
<div class="t" style="left:169.5px;top:176px;font-size:11px;line-height:11px;color:#1d1a1a;transform:scaleX(0.9891);">5.1.8958332</div>
<div class="t" style="left:269.2px;top:176px;font-size:11px;line-height:11px;color:#1d1a1a;transform:scaleX(1.0042);">Systest Account 1</div>
<div class="t" style="left:368.7px;top:176px;font-size:11px;line-height:11px;color:#1d1a1a;transform:scaleX(0.9909);">Pending</div>
<div class="t" style="left:459px;top:176px;font-size:11px;line-height:11px;color:#1d1a1a;transform:scaleX(1.0296);">Take Profit</div>
<div class="t" style="left:658.8px;top:176px;font-size:11px;line-height:11px;color:#1d1a1a;transform:scaleX(0.9555);">Single Order</div>
<div class="t" style="left:776.8px;top:176px;font-size:11px;line-height:11px;color:#1d1a1a;transform:scaleX(0.8850);">EURUSD</div>
<div class="t" style="left:868.8px;top:176px;font-size:11px;line-height:11px;color:#1d1a1a;transform:scaleX(0.8850);">EUR</div>
<div class="t" style="left:966.8px;top:176px;font-size:11px;line-height:11px;color:#1d1a1a;transform:scaleX(0.9031);">SELL</div>
<div class="t" style="left:1058.8px;top:176px;font-size:11px;line-height:11px;color:#1d1a1a;transform:scaleX(0.9500);">1.2000</div>
</div>
<div class="a" style="left:68px;top:506px;width:1px;height:176px;background:#e0e0da"></div>
<div class="a" style="left:168px;top:506px;width:1px;height:176px;background:#e0e0da"></div>
<div class="a" style="left:268px;top:506px;width:1px;height:176px;background:#e0e0da"></div>
<div class="a" style="left:368px;top:506px;width:1px;height:176px;background:#e0e0da"></div>
<div class="a" style="left:458px;top:506px;width:1px;height:176px;background:#e0e0da"></div>
<div class="a" style="left:562px;top:506px;width:1px;height:176px;background:#e0e0da"></div>
<div class="a" style="left:658px;top:506px;width:1px;height:176px;background:#e0e0da"></div>
<div class="a" style="left:776px;top:506px;width:1px;height:176px;background:#e0e0da"></div>
<div class="a" style="left:868px;top:506px;width:1px;height:176px;background:#e0e0da"></div>
<div class="a" style="left:966px;top:506px;width:1px;height:176px;background:#e0e0da"></div>
<div class="a" style="left:1058px;top:506px;width:1px;height:176px;background:#e0e0da"></div>
<div class="a" style="left:1083px;top:506px;width:10px;height:176px;background:rgba(0,0,0,.6)"></div>
<div class="a" style="left:1083px;top:507px;width:10px;height:10px;background:rgba(255,255,255,.35);border-radius:5px"></div>
<div class="a" style="left:9px;top:682px;width:1074px;height:10px;background:#636363"></div>
<div class="a" style="left:9px;top:682px;width:459px;height:10px;background:#8a8a8a;border-radius:3px 5px 5px 3px"></div>
<div class="a" style="left:1083px;top:682px;width:10px;height:10px;background:#f0f0ea"></div>
<div class="a" style="left:275px;top:175px;width:296px;height:441px;background:#f8f8f3;border:1px solid #8f8f8b"></div>
<div class="a" style="left:275px;top:175px;width:296px;height:26px;background:#1d1a1a;border-bottom:1px solid #e2001a"></div>
<div class="t" style="left:281.8px;top:180px;font-size:15px;line-height:15px;font-weight:bold;color:#fff;transform:scaleX(0.9069);">GBPUSD</div>
<svg class="a" style="left:551.3px;top:182.6px" width="10.4" height="10.4" viewBox="0 0 10.4 10.4"><path d="M1.5 1.5 L8.900 8.900 M8.900 1.500 L1.500 8.900" stroke="#fff" stroke-width="2.8" fill="none"/></svg>
<div class="a" style="left:276px;top:201px;width:294px;height:73px;background:#f0f0ea;border-bottom:1px solid #deded8"></div>
<div class="t" style="left:288.4px;top:214px;font-size:12px;line-height:12px;font-weight:bold;color:#3a3736;transform:scaleX(0.9344);">Strategy:</div>
<div class="t" style="left:430.2px;top:214px;font-size:12px;line-height:12px;font-weight:bold;color:#3a3736;transform:scaleX(0.9461);">Settlement account:</div>
<div class="a" style="left:288px;top:235px;width:127px;height:25px;background:#fff;border:1px solid #f7f7f4;border-bottom-color:#e2e2dc;border-radius:2px"></div>
<div class="t" style="left:297px;top:243px;font-size:11px;line-height:11px;color:#3a3736;transform:scaleX(0.9911);-webkit-text-stroke:.45px #3a3736;">Single Order</div>
<svg class="a" style="left:398px;top:246px" width="8" height="6" viewBox="0 0 8 6"><path d="M0 0 H8 L4 6 Z" fill="#8a8a86"/></svg>
<div class="a" style="left:430px;top:235px;width:127px;height:25px;background:#fff;border:1px solid #f7f7f4;border-bottom-color:#e2e2dc;border-radius:2px"></div>
<div class="t" style="left:439px;top:243px;font-size:11px;line-height:11px;color:#3a3736;transform:scaleX(1.0078);-webkit-text-stroke:.45px #3a3736;">Account 1</div>
<svg class="a" style="left:540px;top:246px" width="8" height="6" viewBox="0 0 8 6"><path d="M0 0 H8 L4 6 Z" fill="#8a8a86"/></svg>
<div class="a" style="left:296.5px;top:286px;width:253.5px;height:25px;background:#fff;border:1px solid #8e8e8a;border-radius:3px 3px 0 0"></div>
<div class="t" style="left:305.3px;top:294px;font-size:11px;line-height:11px;color:#3a3736;transform:scaleX(1.0729);-webkit-text-stroke:.45px #3a3736;">Take-Profit</div>
<svg class="a" style="left:533px;top:296px" width="8" height="6" viewBox="0 0 8 6"><path d="M0 5.5 H8 L4 0 Z" fill="#8a8a86"/></svg>
<div class="a" style="left:297px;top:404px;width:253px;height:45px;background:#fff;border:1px solid #deded8"></div>
<div class="t" style="left:302.8px;top:412px;font-size:12px;line-height:12px;color:#4a4745;transform:scaleX(1.0094);">Comment</div>
<svg class="a" style="left:538.5px;top:438.3px" width="10" height="10" viewBox="0 0 10 10"><path d="M1 9.5 L9.5 1 M5.5 9.5 L9.5 5.5" stroke="#444" stroke-width="1" fill="none"/></svg>
<div class="a" style="left:296.5px;top:311px;width:253.5px;height:76px;background:#fff;border:1px solid #aaa;border-top:none;box-shadow:0 4px 5px rgba(0,0,0,.18)"></div>
<div class="a" style="left:297.5px;top:311px;width:251.5px;height:24.5px;background:linear-gradient(#3875d7,#2a62bc)"></div>
<div class="t" style="left:305.3px;top:318px;font-size:11px;line-height:11px;font-weight:bold;color:#fff;transform:scaleX(0.9959);">Take-Profit</div>
<div class="t" style="left:305.3px;top:343px;font-size:11px;line-height:11px;color:#3a3736;transform:scaleX(1.0036);-webkit-text-stroke:.45px #3a3736;">Stop-Loss</div>
<div class="t" style="left:305.3px;top:368px;font-size:11px;line-height:11px;color:#3a3736;transform:scaleX(0.9717);-webkit-text-stroke:.45px #3a3736;">Call Order</div>
<div class="a" style="left:399px;top:526px;width:56px;height:25px;overflow:hidden"><div class="a" style="left:0;top:0;width:56px;height:56px;border-radius:50%;background:#e7e7e6;border:1px solid #deded8"></div></div>
<svg class="a" style="left:418px;top:531px" width="18" height="18" viewBox="0 0 18 18"><path d="M1.7 3.6 H16.4 V16.3 H1.7 Z" fill="#ececeb" stroke="#595654" stroke-width="1.2"/><path d="M1.1 3 H3.6 V7.5 H1.1 Z M14.500 3 H17 V7.500 H14.500 Z M1.100 6.500 H17 V7.600 H1.100 Z M4.900 0.800 H6.800 V5.600 H4.900 Z M11.300 0.800 H13.200 V5.600 H11.300 Z M7.800 3.200 H10.300 V6.500 H7.800 Z" fill="#595654"/><text x="9.1" y="14" font-family="Liberation Sans, sans-serif" font-size="6.8" font-weight="bold" fill="#595654" text-anchor="middle">17</text></svg>
<div class="a" style="left:276px;top:551px;width:294px;height:64px;background:#f0f0ea;border-top:1px solid #deded8"></div>
<div class="a" style="left:468px;top:564px;width:90px;height:39px;background:#8b8a85;border:1px solid #7b7a76;border-radius:2px"></div>
<div class="t" style="left:495px;top:577px;font-size:12px;line-height:12px;font-weight:bold;color:#f0f0ea;transform:scaleX(0.8853);">Submit</div>
</body>
</html>
